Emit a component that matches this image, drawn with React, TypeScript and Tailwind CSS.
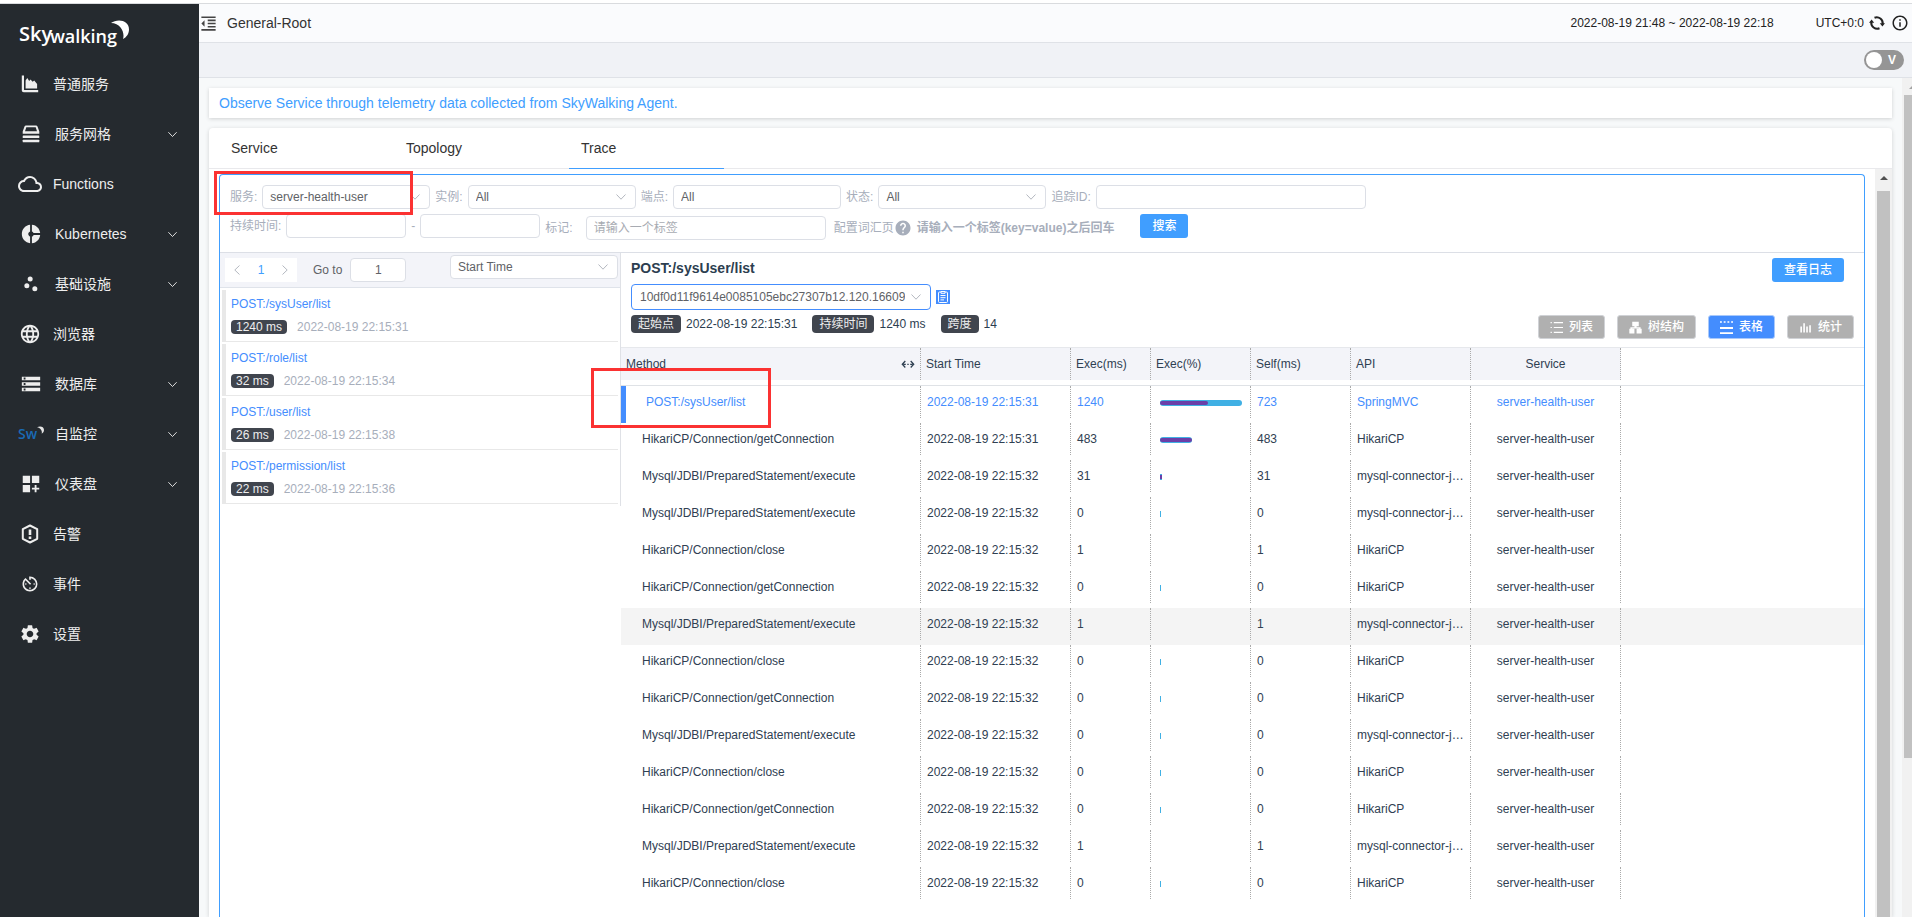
import type { ReactNode } from "react";
import {
  MdAvTimer,
  MdCloudQueue,
  MdDashboardCustomize,
  MdDonutSmall,
  MdFormatIndentDecrease,
  MdHelp,
  MdInfoOutline,
  MdLanguage,
  MdScatterPlot,
  MdSettings,
  MdStorage,
} from "react-icons/md";

const FONT = "font-['Liberation_Sans','Noto_Sans_CJK_SC',sans-serif]";

function Chevron({ className }: { className: string }) {
  return (
    <svg viewBox="0 0 12 12" className={className} fill="none" stroke="currentColor" aria-hidden="true">
      <path d="M1.5 3.5 6 8.2l4.500-4.700" />
    </svg>
  );
}

function ChartIcon() {
  return (
    <svg viewBox="0 0 18 18" className="size-[18px]" fill="currentColor" aria-hidden="true">
      <path d="M.8.500h2.200V14.500c0 .4.200.6.600.6H17.200V17.300H2.800c-1.200 0-2-.8-2-2V.5Z" />
      <path d="M4.600 13.600V5.500L6.300 3l1.900 3 1.300-1.500 2.200 2.200 1.500-1.200 2.900 3.500v4.600H4.600Z" />
    </svg>
  );
}

function MeshIcon() {
  return (
    <svg viewBox="0 0 18 18" className="size-[18px]" fill="currentColor" aria-hidden="true">
      <path
        fillRule="evenodd"
        d="M4 .5h10c.7 0 1.300.4 1.500 1L17.300 6.500v2.300H.7V6.500l1.800-5c.2-.6.8-1 1.500-1ZM4.300 2.300 3 6.300h12l-1.300-4H4.300Z"
      />
      <rect x=".7" y="10.400" width="16.600" height="2.600" rx=".6" />
      <rect x=".7" y="14.700" width="16.600" height="2.600" rx=".6" />
    </svg>
  );
}

function AlarmIcon() {
  return (
    <svg viewBox="0 0 20 20" className="size-5" fill="none" stroke="currentColor" aria-hidden="true">
      <path d="M10 1.500 17.200 5.200v9.600L10 18.500l-7.200-3.700V5.200L10 1.500Z" strokeWidth="2" strokeLinejoin="round" />
      <path d="M10 5.500v5.500M10 12.500V15" strokeWidth="2.600" />
    </svg>
  );
}

function ReloadIcon() {
  return (
    <svg viewBox="0 0 16 16" className="size-4" fill="none" stroke="currentColor" aria-hidden="true">
      <path d="M5.500 2.700A6 6 0 0 1 13.700 9M10.500 13.300A6 6 0 0 1 2.300 7" strokeWidth="2" />
      <path d="M10.800 8.200h5.200l-2.600 3.300ZM0 7.800h5.200L2.600 4.500Z" fill="currentColor" stroke="none" />
    </svg>
  );
}

function Moon({ className }: { className: string }) {
  return (
    <svg viewBox="0 0 18 19" className={className} fill="currentColor" aria-hidden="true">
      <path d="M0 3C6-1.500 18-.5 18 9.500c0 4.200-2.500 7.800-6 9.500C14 13 10 3 0 3Z" />
    </svg>
  );
}

function SelfIcon() {
  return (
    <span className="flex items-start font-['Open_Sans',sans-serif] text-sm leading-4 font-semibold text-[#1a6ab5]">
      Sw
      <Moon className="h-[8px] w-[7px] text-[#e4e4e4]" />
    </span>
  );
}

const NAV: { label: string; icon: ReactNode; open?: boolean }[] = [
  { label: "普通服务", icon: <ChartIcon /> },
  { label: "服务网格", icon: <MeshIcon />, open: true },
  { label: "Functions", icon: <MdCloudQueue className="size-6" /> },
  { label: "Kubernetes", icon: <MdDonutSmall className="size-[22px]" />, open: true },
  { label: "基础设施", icon: <MdScatterPlot className="size-5" />, open: true },
  { label: "浏览器", icon: <MdLanguage className="size-[22px]" /> },
  { label: "数据库", icon: <MdStorage className="size-[22px]" />, open: true },
  { label: "自监控", icon: <SelfIcon />, open: true },
  { label: "仪表盘", icon: <MdDashboardCustomize className="size-[22px]" />, open: true },
  { label: "告警", icon: <AlarmIcon /> },
  { label: "事件", icon: <MdAvTimer className="size-5" /> },
  { label: "设置", icon: <MdSettings className="size-[22px]" /> },
];

function Sidebar() {
  return (
    <aside className="flex w-[199px] shrink-0 flex-col bg-[#252a2f] text-[#eee]">
      <div className="flex h-[55px] items-start pt-4 pl-[19px] font-['Open_Sans',sans-serif] text-xl font-semibold text-white">
        <span>Sky</span>
        <span className="-ml-0.5 pt-0.5 text-lg leading-7">walking</span>
        <Moon className="-ml-1.5 h-[19px] w-[18px]" />
      </div>
      <nav>
        <ul>
          {NAV.map((item) => (
            <li key={item.label}>
              <a href="#" className="flex h-[50px] items-center pr-[21px] pl-[18px] text-sm">
                <span className={item.open ? "mr-[11px] flex w-[26px] justify-center" : "mr-[11px] flex w-6 justify-center"}>
                  {item.icon}
                </span>
                {item.label}
                {item.open && <Chevron className="ml-auto size-[11px]" />}
              </a>
            </li>
          ))}
        </ul>
      </nav>
    </aside>
  );
}

function Header() {
  return (
    <>
      <header className="flex h-[39px] shrink-0 items-center border-b border-[#dfe2e7] bg-[#fafbfd] pr-[3px]">
        <button type="button" aria-label="Collapse menu" className="text-[#444]">
          <MdFormatIndentDecrease className="size-[19px]" />
        </button>
        <h1 className="ml-[9px] text-sm text-[#333]">General-Root</h1>
        <div className="ml-auto flex items-center text-xs text-[#222]">
          <span className="mr-[42px]">2022-08-19 21:48 ~ 2022-08-19 22:18</span>
          <span className="mr-[5px]">UTC+0:0</span>
          <button type="button" aria-label="Reload" className="mr-1.5">
            <ReloadIcon />
          </button>
          <button type="button" aria-label="About">
            <MdInfoOutline className="size-[18px]" />
          </button>
        </div>
      </header>
      <div className="flex h-[35px] shrink-0 items-center justify-end border-b border-[#dfe2e7] bg-[#f0f2f6] pr-2">
        <label className="flex h-5 w-10 items-center justify-between rounded-full bg-[#959595] pr-2 pl-0.5 text-xs font-bold text-white">
          <input type="checkbox" role="switch" className="sr-only" />
          <span className="size-4 rounded-full bg-white" />V
        </label>
      </div>
    </>
  );
}

function SelectBox({
  id,
  label,
  value,
  box,
  select,
}: {
  id: string;
  label?: string;
  value: string;
  box: string;
  select: string;
}) {
  return (
    <span className={`relative flex ${box}`}>
      <select
        id={id}
        aria-label={label}
        className={`w-full appearance-none overflow-hidden rounded border bg-white text-xs text-clip whitespace-nowrap text-[#606266] ${select}`}
      >
        <option>{value}</option>
      </select>
      <Chevron className="pointer-events-none absolute top-1/2 right-[9px] size-3 -translate-y-1/2 text-[#b4b8c0]" />
    </span>
  );
}

const FIELD = "h-6 rounded border border-[#dcdfe6] bg-white text-xs text-[#606266] placeholder:text-[#a8abb2]";

function Filters() {
  return (
    <form className="flex h-[78px] flex-col gap-[5px] border-b border-[#dcdfe6] pt-[10px] pl-[10px] text-xs text-[#a7aebb]">
      <div className="flex items-center gap-[5px]">
        <label htmlFor="service">服务:</label>
        <SelectBox id="service" value="server-health-user" box="w-[168px]" select="h-6 border-[#dcdfe6] px-[7px]" />
        <label htmlFor="instance">实例:</label>
        <SelectBox id="instance" value="All" box="w-[168px]" select="h-6 border-[#dcdfe6] px-[7px]" />
        <label htmlFor="endpoint">端点:</label>
        <input id="endpoint" defaultValue="All" className={`${FIELD} w-[168px] px-[7px]`} />
        <label htmlFor="status">状态:</label>
        <SelectBox id="status" value="All" box="w-[168px]" select="h-6 border-[#dcdfe6] px-[7px]" />
        <label htmlFor="trace-id">追踪ID:</label>
        <input id="trace-id" className={`${FIELD} w-[270px] px-[7px]`} />
      </div>
      <div className="flex items-start">
        <div className="flex items-center gap-[5px]">
          <label htmlFor="duration-min">持续时间:</label>
          <input id="duration-min" className={`${FIELD} w-[120px] px-[7px]`} />
          <span>-</span>
          <input aria-label="Maximum duration" className={`${FIELD} w-[120px] px-[7px]`} />
        </div>
        <div className="ml-[5px] flex items-center pt-0.5">
          <label htmlFor="tags">标记:</label>
          <input id="tags" placeholder="请输入一个标签" className={`${FIELD} ml-[13px] w-60 px-[7px]`} />
          <a href="#" className="ml-2">
            配置词汇页
          </a>
          <MdHelp className="size-[18px]" />
          <b className="ml-[5px]">请输入一个标签(key=value)之后回车</b>
        </div>
        <button type="submit" className="ml-[26px] h-6 w-12 rounded-[3px] bg-[#409eff] font-medium text-white">
          搜索
        </button>
      </div>
    </form>
  );
}

const TRACES = [
  { name: "POST:/sysUser/list", ms: "1240 ms", time: "2022-08-19 22:15:31" },
  { name: "POST:/role/list", ms: "32 ms", time: "2022-08-19 22:15:34" },
  { name: "POST:/user/list", ms: "26 ms", time: "2022-08-19 22:15:38" },
  { name: "POST:/permission/list", ms: "22 ms", time: "2022-08-19 22:15:36" },
];

function TraceList() {
  return (
    <section className="w-[401px] shrink-0 self-start border-r border-[#dfe1e6] text-xs">
      <div className="flex h-[35px] items-start border-b border-[#dfe3ea] bg-[#f3f4f9] pr-0.5 pl-[5px] text-[#606266]">
        <div className="mt-[5px] flex h-6 w-[72px] items-center justify-between bg-white px-1.5">
          <button type="button" aria-label="Previous page">
            <Chevron className="size-3 rotate-90 text-[#b4b8c0]" />
          </button>
          <button type="button" className="text-[#409eff]">
            1
          </button>
          <button type="button" aria-label="Next page">
            <Chevron className="size-3 -rotate-90 text-[#b4b8c0]" />
          </button>
        </div>
        <label htmlFor="goto" className="mt-[5px] ml-4 leading-6">
          Go to
        </label>
        <input id="goto" defaultValue="1" className={`${FIELD} mt-[5px] ml-2 w-14 text-center`} />
        <SelectBox
          id="order"
          label="Order"
          value="Start Time"
          box="mt-0.5 ml-auto w-[168px]"
          select="h-6 border-[#dcdfe6] px-[7px]"
        />
      </div>
      <ul className="flex flex-col gap-0.5 p-0.5">
        {TRACES.map((t) => (
          <li
            key={t.name}
            className="flex h-[52px] flex-col gap-2 border-b border-l-4 border-[#e8e8e8] pt-1.5 pl-[5px]"
          >
            <a href="#" className="leading-4 text-[#448dfe]">
              {t.name}
            </a>
            <div className="flex items-center gap-[10px] leading-[14px] text-[#a7aebb]">
              <span className="rounded bg-[#40454e] px-[5px] text-[#eee]">{t.ms}</span>
              {t.time}
            </div>
          </li>
        ))}
      </ul>
    </section>
  );
}

function ListGlyph() {
  return (
    <svg viewBox="0 0 12 12" className="size-[13px]" fill="none" stroke="currentColor" aria-hidden="true">
      <path d="M3.500 1.500H12M3.500 6H12M3.500 10.500H12M.5 1.500h1.200M.5 6h1.200M.5 10.500h1.200" />
    </svg>
  );
}

function TreeGlyph() {
  return (
    <svg viewBox="0 0 12 12" className="size-[13px]" fill="currentColor" aria-hidden="true">
      <path d="M3 .8h6v4H7v.9h3.700v1.500h1V11.500H7V7.200h2V7H3v.2h2v4.300H.3V7.200h1V5.700H5V4.800H3Z" />
    </svg>
  );
}

function TableGlyph() {
  return (
    <svg viewBox="0 0 14 14" className="size-[13px]" fill="none" stroke="currentColor" strokeWidth="2" aria-hidden="true">
      <path d="M0 1h14" strokeDasharray="2" strokeWidth="1.500" />
      <path d="M0 7.500h14M0 13h14" />
    </svg>
  );
}

function StatGlyph() {
  return (
    <svg viewBox="0 0 12 12" className="size-[13px]" fill="none" stroke="currentColor" strokeWidth="1.500" aria-hidden="true">
      <path d="M2 5v5.500M4.700 2v8.500M7.400 5v5.500M10.200 4v6.500" />
    </svg>
  );
}

const VIEWS: { label: string; icon: ReactNode; active?: boolean }[] = [
  { label: "列表", icon: <ListGlyph /> },
  { label: "树结构", icon: <TreeGlyph /> },
  { label: "表格", icon: <TableGlyph />, active: true },
  { label: "统计", icon: <StatGlyph /> },
];

const SUMMARY = [
  { label: "起始点", value: "2022-08-19 22:15:31" },
  { label: "持续时间", value: "1240 ms" },
  { label: "跨度", value: "14" },
];

const CONN = "HikariCP/Connection/getConnection";
const CLOSE = "HikariCP/Connection/close";
const EXEC = "Mysql/JDBI/PreparedStatement/execute";
const MYSQL = "mysql-connector-java";

type Span = { method: string; sec: number; exec: number; total: number; own: number; self: number; api: string };

const SPANS: Span[] = [
  { method: "POST:/sysUser/list", sec: 31, exec: 1240, total: 82, own: 48, self: 723, api: "SpringMVC" },
  { method: CONN, sec: 31, exec: 483, total: 32, own: 32, self: 483, api: "HikariCP" },
  { method: EXEC, sec: 32, exec: 31, total: 2, own: 2, self: 31, api: MYSQL },
  { method: EXEC, sec: 32, exec: 0, total: 1, own: 0, self: 0, api: MYSQL },
  { method: CLOSE, sec: 32, exec: 1, total: 0, own: 0, self: 1, api: "HikariCP" },
  { method: CONN, sec: 32, exec: 0, total: 1, own: 0, self: 0, api: "HikariCP" },
  { method: EXEC, sec: 32, exec: 1, total: 0, own: 0, self: 1, api: MYSQL },
  { method: CLOSE, sec: 32, exec: 0, total: 1, own: 0, self: 0, api: "HikariCP" },
  { method: CONN, sec: 32, exec: 0, total: 1, own: 0, self: 0, api: "HikariCP" },
  { method: EXEC, sec: 32, exec: 0, total: 1, own: 0, self: 0, api: MYSQL },
  { method: CLOSE, sec: 32, exec: 0, total: 1, own: 0, self: 0, api: "HikariCP" },
  { method: CONN, sec: 32, exec: 0, total: 1, own: 0, self: 0, api: "HikariCP" },
  { method: EXEC, sec: 32, exec: 1, total: 0, own: 0, self: 1, api: MYSQL },
  { method: CLOSE, sec: 32, exec: 0, total: 1, own: 0, self: 0, api: "HikariCP" },
];

function HeadCell({ children, center }: { children: ReactNode; center?: boolean }) {
  return (
    <th className="border-b border-[#dfe2e6] p-0 pb-[5px] text-left font-normal">
      <div
        className={`flex h-8 items-center border-r border-dotted border-[#aaa] bg-[#f3f4f9] px-[5px] ${
          center ? "justify-center" : "justify-between"
        }`}
      >
        {children}
      </div>
    </th>
  );
}

function Cell({ children, className = "pl-[6px]" }: { children?: ReactNode; className?: string }) {
  return (
    <td className="p-0 pb-[5px]">
      <div className={`h-8 truncate border-r border-dotted border-[#aaa] leading-[33px] ${className}`}>{children}</div>
    </td>
  );
}

function SpanTable() {
  return (
    <table className="w-full table-fixed border-separate border-spacing-0 border-t border-[#e6e8ec] text-xs text-[#2f4052]">
      <colgroup>
        <col className="w-[300px]" />
        <col className="w-[150px]" />
        <col className="w-20" />
        <col className="w-[100px]" />
        <col className="w-[100px]" />
        <col className="w-[120px]" />
        <col className="w-[150px]" />
        <col />
      </colgroup>
      <thead>
        <tr>
          <HeadCell>
            Method
            <svg viewBox="0 0 14 10" className="h-[10px] w-[14px]" fill="none" stroke="currentColor" aria-hidden="true">
              <path d="M4.300 2 1.300 5.300l3 3.200M9.700 2l3 3.300-3 3.200M2.500 5.300h2.300M6.300 5.300h1.400M9.200 5.300h2.300" strokeWidth="1.300" />
            </svg>
          </HeadCell>
          <HeadCell>Start Time</HeadCell>
          <HeadCell>Exec(ms)</HeadCell>
          <HeadCell>Exec(%)</HeadCell>
          <HeadCell>Self(ms)</HeadCell>
          <HeadCell>API</HeadCell>
          <HeadCell center>Service</HeadCell>
          <th className="border-b border-[#dfe2e6] p-0" />
        </tr>
      </thead>
      <tbody>
        {SPANS.map((s, i) => (
          <tr key={i} className={i === 0 ? "text-[#448dfe]" : i === 6 ? "bg-[#f4f4f4]" : ""}>
            {i === 0 ? (
              <td className="border-l-5 border-[#448dfe] p-0 pb-[5px]">
                <div className="h-8 truncate border-r border-dotted border-[#aaa] pl-5 leading-[33px]">{s.method}</div>
              </td>
            ) : (
              <Cell className="pl-[21px]">{s.method}</Cell>
            )}
            <Cell>{`2022-08-19 22:15:${s.sec}`}</Cell>
            <Cell>{s.exec}</Cell>
            <Cell className="flex items-center pt-0.5 pl-[9px]">
              {s.total > 0 && (
                <div
                  className={`flex h-1.5 items-center bg-[#40b0e4] ${s.total > 2 ? "rounded-full" : ""}`}
                  style={{ width: s.total }}
                >
                  <div
                    className={`h-1 bg-[#6b3fa8] ${s.total > 2 ? "rounded-full" : ""}`}
                    style={{ width: s.own }}
                  />
                </div>
              )}
            </Cell>
            <Cell>{s.self}</Cell>
            <Cell className="pr-[5px] pl-[6px]">{s.api}</Cell>
            <Cell className="text-center">server-health-user</Cell>
            <td className="p-0" />
          </tr>
        ))}
      </tbody>
    </table>
  );
}

function TraceDetail() {
  return (
    <section className="min-w-0 flex-1 text-xs text-[#2c3e50]">
      <div className="flex h-[31px] items-start justify-between pt-[5px] pr-5 pl-[10px]">
        <h2 className="text-sm font-bold">POST:/sysUser/list</h2>
        <button type="button" className="h-6 w-[72px] rounded-[3px] bg-[#409eff] font-medium text-white">
          查看日志
        </button>
      </div>
      <div className="flex items-center gap-[5px] pl-[10px]">
        <SelectBox
          id="trace"
          label="Trace"
          value="10df0d11f9614e0085105ebc27307b12.120.16609"
          box="w-[300px]"
          select="h-[26px] border-[#448dfe] pr-[25px] pl-2"
        />
        <button type="button" aria-label="Copy trace id" className="text-[#448dfe]">
          <svg viewBox="0 0 14 14" className="size-3.5" aria-hidden="true">
            <path fill="currentColor" d="M0 0h14v14H0z" />
            <path
              d="M5 2H3.500a1 1 0 0 0-1 1v8.500a1 1 0 0 0 1 1h7a1 1 0 0 0 1-1V3a1 1 0 0 0-1-1H9M5 1.500h4v1.800H5ZM4.500 5.500h5M4.500 7.700h5M4.500 9.900h3.500"
              fill="none"
              stroke="#fff"
            />
          </svg>
        </button>
      </div>
      <div className="flex items-start justify-between pt-[5px] pr-[10px] pb-2 pl-[10px]">
        <dl className="flex gap-[15px] leading-[18px]">
          {SUMMARY.map((s) => (
            <div key={s.label} className="flex gap-[5px]">
              <dt className="rounded bg-[#40454e] px-[7px] text-[#eee]">{s.label}</dt>
              <dd>{s.value}</dd>
            </div>
          ))}
        </dl>
        <div className="flex gap-3">
          {VIEWS.map((v) => (
            <button
              key={v.label}
              type="button"
              className={`flex h-6 items-center gap-1.5 rounded-[3px] border px-[11px] font-medium text-white ${
                v.active ? "border-[#a9c9fb] bg-[#448dfe]" : "border-[#d0d2d6] bg-[#b0b0b0]"
              }`}
            >
              {v.icon}
              {v.label}
            </button>
          ))}
        </div>
      </div>
      <SpanTable />
    </section>
  );
}

const TABS = ["Service", "Topology", "Trace"];

export default function App() {
  return (
    <div className={`relative flex h-screen flex-col overflow-hidden bg-white ${FONT}`}>
      <div className="h-1 shrink-0 border-b border-[#d9dbde]" />
      <div className="flex min-h-0 flex-1">
        <Sidebar />
        <div className="flex min-w-0 flex-1 flex-col bg-[#f7f9fa]">
          <Header />
          <div className="flex min-h-0 flex-1">
            <main className="flex min-w-0 flex-1 flex-col gap-[10px] px-[10px] pt-[10px]">
              <p className="h-[30px] shrink-0 bg-white pl-[10px] text-sm leading-[30px] text-[#409eff] shadow-[0_1px_4px_rgba(0,0,0,0.16)]">
                Observe Service through telemetry data collected from SkyWalking Agent.
              </p>
              <div className="flex min-h-0 flex-1 flex-col rounded-t bg-white shadow-[0_1px_4px_rgba(0,0,0,0.16)]">
                <div role="tablist" className="flex h-[41px] shrink-0 gap-5 border-b border-[#e9e9ec] px-[10px] text-sm text-[#333]">
                  {TABS.map((tab) => (
                    <button
                      key={tab}
                      type="button"
                      role="tab"
                      aria-selected={tab === "Trace"}
                      className={`-mb-px w-[155px] border-b pl-3 text-left ${
                        tab === "Trace" ? "border-[#409eff]" : "border-transparent"
                      }`}
                    >
                      {tab}
                    </button>
                  ))}
                </div>
                <div className="flex min-h-0 flex-1">
                  <div className="flex min-w-0 flex-1 flex-col overflow-hidden px-[10px] pt-[5px]">
                    <div className="flex min-h-0 flex-1 flex-col rounded-t border border-b-0 border-[#409eff]">
                      <Filters />
                      <div className="flex min-h-0 flex-1 overflow-hidden">
                        <TraceList />
                        <TraceDetail />
                      </div>
                    </div>
                  </div>
                  <div className="flex w-[17px] flex-col bg-[#f1f1f1] px-0.5">
                    <div className="flex h-[22px] justify-center pt-[7px]">
                      <span className="h-0 border-x-4 border-b-4 border-x-transparent border-b-[#505050]" />
                    </div>
                    <div className="flex-1 bg-[#c1c1c1]" />
                  </div>
                </div>
              </div>
            </main>
            <div className="flex w-[10px] shrink-0 flex-col overflow-hidden bg-[#f1f1f1] pl-0.5">
              <div className="h-[17px] pt-[7px] pl-[5px]">
                <span className="block size-0 border-x-4 border-b-4 border-x-transparent border-b-[#a3a3a3]" />
              </div>
              <div className="h-[79%] bg-[#c1c1c1]" />
            </div>
          </div>
        </div>
      </div>
      <div className="pointer-events-none absolute top-[171px] left-[214px] h-11 w-[199px] border-3 border-[#fb3232]" />
      <div className="pointer-events-none absolute top-[368px] left-[591px] h-[60px] w-[180px] border-3 border-[#fb3232]" />
    </div>
  );
}
